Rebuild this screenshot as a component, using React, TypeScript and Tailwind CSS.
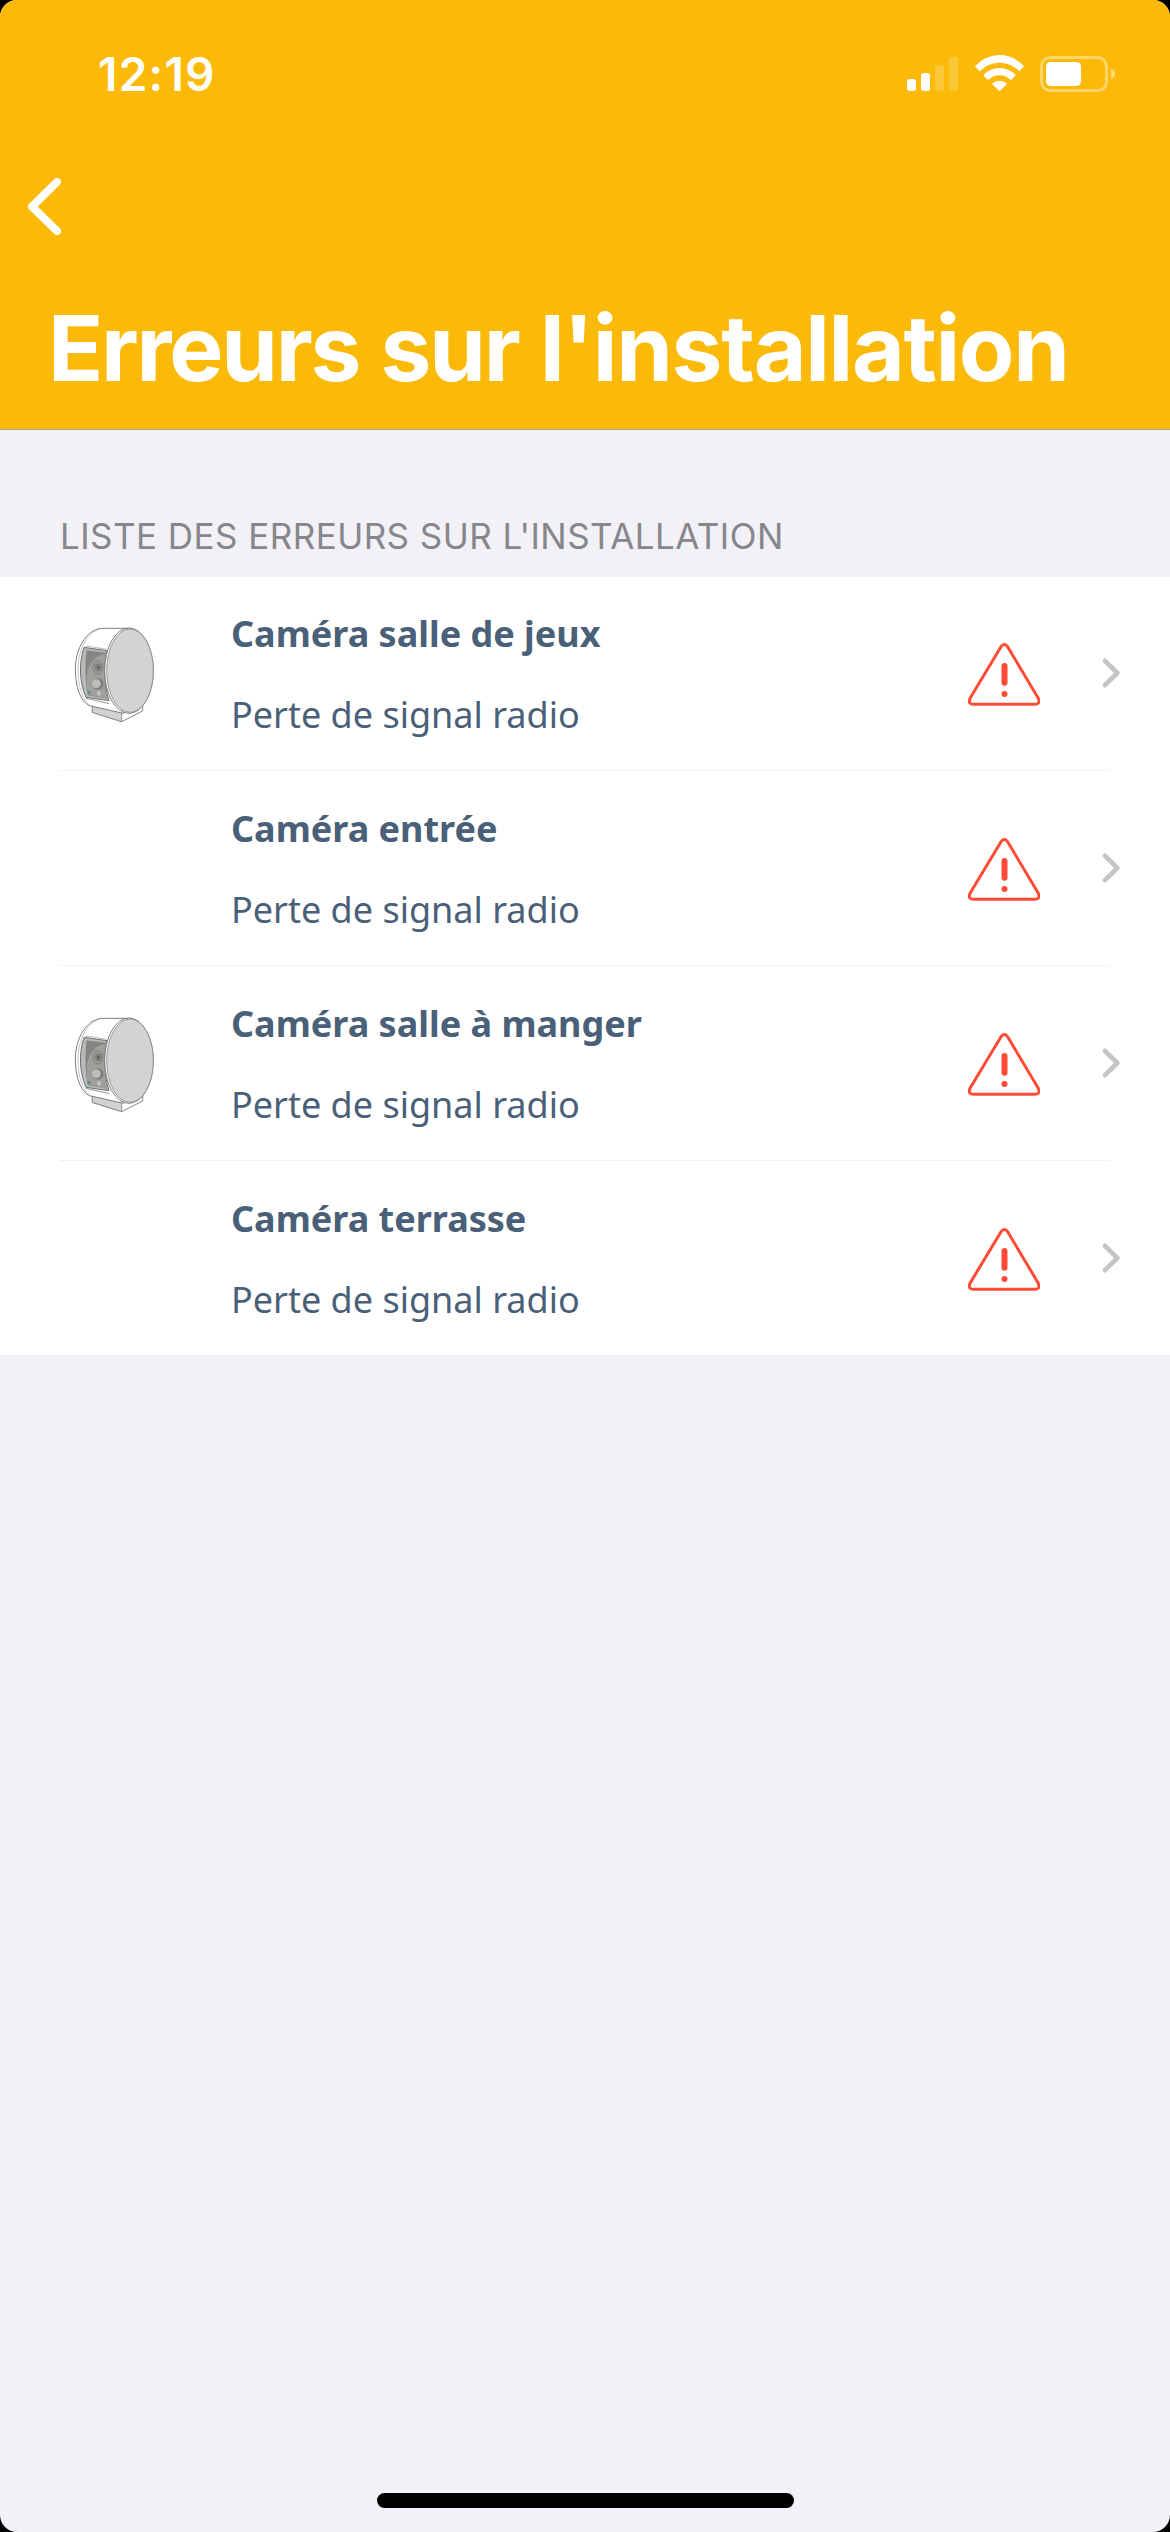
type DeviceError = { name: string; message: string; hasImage: boolean };

const errors: DeviceError[] = [
  { name: "Caméra salle de jeux", message: "Perte de signal radio", hasImage: true },
  { name: "Caméra entrée", message: "Perte de signal radio", hasImage: false },
  { name: "Caméra salle à manger", message: "Perte de signal radio", hasImage: true },
  { name: "Caméra terrasse", message: "Perte de signal radio", hasImage: false },
];

function SignalIcon() {
  return (
    <svg className="h-[36px] w-[51px]" viewBox="0 0 153 108" fill="#fff">
      <rect x="0" y="69" width="27" height="36" rx="8" />
      <rect x="42" y="51" width="27" height="54" rx="8" />
      <rect x="84" y="27" width="27" height="78" rx="8" opacity="0.2" />
      <rect x="126" y="3" width="27" height="102" rx="8" opacity="0.2" />
    </svg>
  );
}

function WifiIcon() {
  return (
    <svg className="h-[36px] w-[49px] overflow-visible" viewBox="0 0 147 108" fill="#fff">
      <path d="M1 30 Q32 -3 73.500 -3 Q115 -3 146 30 Q147 32 145 34 L134 44.500 Q132.500 45.500 131 44 Q106 20 73.500 20 Q41 20 16 44 Q14.500 45.500 13 44.500 L2 34 Q0 32 1 30 Z" />
      <path d="M26 56 Q46 36 73.500 36 Q101 36 121 56 Q122 57.500 121 59 L109 71 Q107.500 72 106 71 Q92 58 73.500 58 Q55 58 41 71 Q39.500 72 38 71 L26 59 Q25 57.500 26 56 Z" />
      <path d="M52 81.500 Q60 74 73.500 74 Q87 74 95 81.500 Q96 83 95 84.500 L75 104 Q73.500 105.500 72 104 L52 84.500 Q51 83 52 81.500 Z" />
    </svg>
  );
}

function BatteryIcon() {
  return (
    <svg className="h-[36px] w-[75px]" viewBox="0 0 225 108">
      <rect x="4.500" y="4.500" width="195" height="99" rx="26" fill="none" stroke="#fff" strokeOpacity="0.4" strokeWidth="9" />
      <rect x="18" y="18" width="105" height="72" rx="14" fill="#fff" />
      <path d="M213 38 Q225 43 225 54 Q225 65 213 70 Z" fill="#fff" fillOpacity="0.5" />
    </svg>
  );
}

function CameraImage() {
  return (
    <svg className="h-[130px] w-[120px]" viewBox="0 0 360 390" strokeLinejoin="round">
      <path d="M97 288 L97 307 L185 335 L248 303 L248 284 L185 290 Z" fill="#fff" stroke="#858585" strokeWidth="3" />
      <path d="M97 288 L185 306 L185 335 L97 307 Z" fill="#d2d2d2" stroke="#858585" strokeWidth="2.500" />
      <path
        d="M212 55 L122 55 C78 62 46 116 46 178 C46 232 62 274 88 287 L190 310 Z"
        fill="#fff"
        stroke="#7d7d7d"
        strokeWidth="3"
      />
      <path d="M122 56 C82 66 54 118 54 178 C54 226 66 266 88 285" fill="none" stroke="#a5a5a5" strokeWidth="2" />
      <path d="M72 112 L141 122 C130 160 131 222 147 272 L78 262 C58 218 56 160 72 112 Z" fill="#b9b9b7" stroke="#6e6e6e" strokeWidth="3" />
      <path d="M80 121 L138 128 C129 166 130 218 143 266 L83 256 C76 212 74 162 80 121 Z" fill="#858583" />
      <path d="M132 132 C98 138 80 172 80 206 C80 228 82 244 86 254 L142 266 C131 220 129 172 137 133 Z" fill="#9f9f9c" />
      <ellipse cx="114" cy="172" rx="15" ry="20" fill="#9b9b98" stroke="#777" strokeWidth="2.500" />
      <ellipse cx="115" cy="172" rx="9" ry="11" fill="#858583" stroke="#6e6e6e" strokeWidth="2" />
      <ellipse cx="115" cy="172" rx="4" ry="5" fill="#5f5f5d" />
      <circle cx="114" cy="222" r="17" fill="#7e7e7c" />
      <circle cx="109" cy="221" r="13" fill="#bdbdbb" />
      <ellipse cx="117" cy="250" rx="6" ry="7" fill="#c4c4c2" />
      <path d="M86 243 L92 248 L87 251 Z" fill="#1f8fae" stroke="#1f8fae" strokeWidth="2" />
      <path d="M70 121 L80 108 L140 118" fill="none" stroke="#999" strokeWidth="2" />
      <path d="M78 265 L148 281" fill="none" stroke="#7d7d7d" strokeWidth="2.500" />
      <ellipse cx="207" cy="182" rx="73" ry="128" fill="#fff" stroke="#7d7d7d" strokeWidth="3" />
      <ellipse cx="210" cy="182" rx="70" ry="125" fill="#d3d3d3" stroke="#8a8a8a" strokeWidth="2.500" />
    </svg>
  );
}

function WarningIcon() {
  return (
    <svg className="h-[63px] w-[72px]" viewBox="0 0 216 189" fill="none" stroke="#ff4b36">
      <path
        d="M100 10 Q109 -1 118 10 L210 164 Q219 184 200 184 L17 184 Q-2 184 7 164 Z"
        strokeWidth="9"
        strokeLinejoin="round"
      />
      <path d="M109.500 69 L109.500 119" strokeWidth="18" strokeLinecap="round" />
      <circle cx="109.500" cy="153" r="9" fill="#ff4b36" stroke="none" />
    </svg>
  );
}

function DisclosureIcon() {
  return (
    <svg
      className="h-[30px] w-[18px]"
      viewBox="0 0 54 90"
      fill="none"
      stroke="#c4c4c6"
      strokeWidth="14"
      strokeLinecap="round"
      strokeLinejoin="round"
    >
      <path d="M9 8.500 L46 45 L9 81.500" />
    </svg>
  );
}

function ErrorRow({ item }: { item: DeviceError }) {
  return (
    <li className="group">
      <div className="flex h-[194px] items-end pl-[60px] pr-[50px] group-first:h-[193px]">
        <div className="mb-[30px] h-[130px] w-[120px] shrink-0">{item.hasImage && <CameraImage />}</div>
        <div className="ml-[51px] flex flex-1 flex-col gap-px whitespace-nowrap pb-[15px] text-[36px] leading-[80px] text-[#4a5f78]">
          <h3 className="font-bold">{item.name}</h3>
          <p>{item.message}</p>
        </div>
        <div className="mb-[64px]">
          <WarningIcon />
        </div>
        <div className="mb-[82px] ml-[62px]">
          <DisclosureIcon />
        </div>
      </div>
      <div className="mx-[60px] h-px bg-[#f2f2f3] group-last:hidden" />
    </li>
  );
}

export default function App() {
  return (
    <div className="h-[2532px] w-[1170px] bg-black">
      <div className="flex h-full flex-col overflow-hidden rounded-[17px] bg-[#f2f1f7] font-['Noto_Sans',sans-serif]">
        <header className="h-[430px] border-b border-[#a9a5a4] bg-[#fbb909] font-['Inter',sans-serif] text-white">
          <div className="flex h-[148px] items-start justify-between pl-[98px] pr-[55px]">
            <span className="mt-[46px] text-[46px] font-semibold leading-[56px] tracking-[1.200px]">12:19</span>
            <div className="mt-[56px] flex items-center">
              <SignalIcon />
              <span className="ml-[17px]">
                <WifiIcon />
              </span>
              <span className="ml-[16px]">
                <BatteryIcon />
              </span>
            </div>
          </div>
          <button className="ml-[28px] mt-[30px] block" aria-label="Retour">
            <svg
              className="h-[57px] w-[33px]"
              viewBox="0 0 99 171"
              fill="none"
              stroke="#fff"
              strokeWidth="24"
              strokeLinecap="round"
              strokeLinejoin="round"
            >
              <path d="M87 12 L12 86 L87 159" />
            </svg>
          </button>
          <h1 className="ml-[48px] mt-[58px] whitespace-nowrap text-[91px] font-bold leading-[110px] tracking-[-1.300px] [word-spacing:1px]">
            <span className="tracking-[-2.200px]">Erreurs</span> <span className="tracking-[-2.200px]">sur</span>{" "}
            l'installation
          </h1>
        </header>
        <h2 className="h-[147px] whitespace-nowrap pl-[60px] pt-[85px] font-['Inter',sans-serif] text-[35px] leading-[42px] tracking-[0.450px] text-[#87868b]">
          LISTE DES ERREURS SUR L'INSTALLATION
        </h2>
        <ul className="bg-white">
          {errors.map((item) => (
            <ErrorRow key={item.name} item={item} />
          ))}
        </ul>
        <div className="mx-auto mb-[24px] mt-auto h-[15px] w-[417px] rounded-full bg-black" />
      </div>
    </div>
  );
}
